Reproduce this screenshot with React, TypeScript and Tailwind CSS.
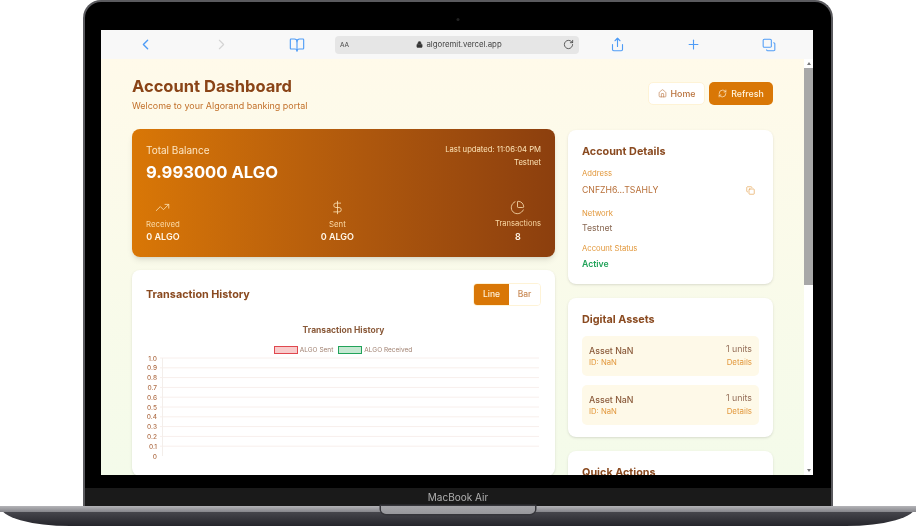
import React from 'react';
import {
  BookOpen,
  ChevronLeft,
  ChevronRight,
  Copy,
  DollarSign,
  Home,
  Lock,
  PieChart,
  Plus,
  RefreshCw,
  RotateCw,
  Share,
  TrendingUp,
} from 'lucide-react';

const ticks = ['1.0', '0.9', '0.8', '0.7', '0.6', '0.5', '0.4', '0.3', '0.2', '0.1', '0'];

const assets = [
  { name: 'Asset NaN', id: 'ID: NaN', units: '1 units' },
  { name: 'Asset NaN', id: 'ID: NaN', units: '1 units' },
];

const SafariBar = () => (
  <div className="flex h-[29px] shrink-0 items-center bg-[#f8f8f8] pl-[6px] text-[#4f9cf6]">
    <div className="flex w-[76px] justify-center">
      <ChevronLeft size={17} strokeWidth={1.9} />
    </div>
    <div className="flex w-[76px] justify-center text-[#d4d4d4]">
      <ChevronRight size={17} strokeWidth={1.6} />
    </div>
    <div className="flex w-[76px] justify-center">
      <BookOpen size={16} strokeWidth={1.7} />
    </div>
    <div className="flex h-[18px] w-[244px] items-center rounded-[4px] bg-[#e6e6e6] px-[5px] text-[#444]">
      <span className="pt-[2px] text-[6.5px]">AA</span>
      <div className="flex flex-1 items-center justify-center gap-[3px] pl-[6px]">
        <Lock size={7} fill="#333" strokeWidth={2} />
        <span className="text-[7.8px]">algoremit.vercel.app</span>
      </div>
      <RotateCw size={11} strokeWidth={1.8} />
    </div>
    <div className="flex w-[76px] justify-center">
      <Share size={15} strokeWidth={1.8} />
    </div>
    <div className="flex w-[76px] justify-center">
      <Plus size={15} strokeWidth={1.8} />
    </div>
    <div className="flex w-[76px] justify-center">
      <Copy size={14} strokeWidth={1.8} className="-scale-x-100 -scale-y-100" />
    </div>
  </div>
);

const BalanceCard = () => (
  <div className="flex h-[128px] flex-col justify-between rounded-[8px] bg-gradient-to-r from-[#d97706] to-[#8c3f0e] px-[14px] pt-[14px] pb-[14px] text-white shadow-md">
    <div className="flex items-start justify-between">
      <div>
        <div className="text-[10px] leading-[14px] text-[#fde6c4]">Total Balance</div>
        <div className="mt-[4px] text-[16.6px] leading-[22px] font-bold">9.993000 ALGO</div>
      </div>
      <div className="text-right text-[7.7px] leading-[13px] text-[#fde3b5]">
        <div>Last updated: 11:06:04 PM</div>
        <div>Testnet</div>
      </div>
    </div>
    <div className="flex items-end justify-between">
      <div className="flex flex-col items-center">
        <TrendingUp size={15} strokeWidth={1.3} className="text-[#fde3b5]" />
        <div className="mt-[3px] text-[7.8px] leading-[12px] text-[#fbd9a5]">Received</div>
        <div className="text-[9px] leading-[13px] font-semibold text-[#fff6e8]">0 ALGO</div>
      </div>
      <div className="flex flex-col items-center">
        <DollarSign size={15} strokeWidth={1.3} className="text-[#fde3b5]" />
        <div className="mt-[3px] text-[7.8px] leading-[12px] text-[#fbd9a5]">Sent</div>
        <div className="text-[9px] leading-[13px] font-semibold text-[#fff6e8]">0 ALGO</div>
      </div>
      <div className="flex flex-col items-center">
        <PieChart size={15} strokeWidth={1.3} className="text-[#fde3b5]" />
        <div className="mt-[3px] text-[7.6px] leading-[12px] text-[#fbd9a5]">Transactions</div>
        <div className="text-[9px] leading-[13px] font-semibold text-[#fff6e8]">8</div>
      </div>
    </div>
  </div>
);

const HistoryCard = () => (
  <div className="h-[206px] rounded-[8px] bg-white px-[14px] pt-[13px] shadow-sm">
    <div className="flex items-center justify-between">
      <h2 className="pt-[1px] text-[10.8px] font-bold text-[#8a4a20]">Transaction History</h2>
      <div className="flex h-[23px] overflow-hidden rounded-[4px] border border-[#fef3d6] text-[8.5px] font-medium">
        <div className="flex w-[35px] items-center justify-center bg-[#d97706] text-[#fff3dc]">Line</div>
        <div className="flex w-[31px] items-center justify-center bg-white text-[#c98a55]">Bar</div>
      </div>
    </div>
    <div className="mt-[18px] text-center text-[8.5px] leading-[12px] font-bold text-[#8a5a3a]">Transaction History</div>
    <div className="mt-[10px] flex items-center justify-center gap-[2px] pr-[1px] text-[6.5px] leading-[8px] text-[#a08070]">
      <span className="h-[8px] w-[24px] border-[1.5px] border-[#e0484f] bg-[#f8cccc]" />
      <span>ALGO Sent</span>
      <span className="ml-[3px] h-[8px] w-[24px] border-[1.5px] border-[#22a35a] bg-[#c6e8d2]" />
      <span>ALGO Received</span>
    </div>
    <svg width="395" height="108" fontFamily="Inter, sans-serif" fontSize="6.5" fontWeight="500" fill="#b0704a">
      {ticks.map((t, i) => (
        <g key={t}>
          {i < 10 && <line x1="14" x2="393" y1={4 + i * 9.8} y2={4 + i * 9.8} stroke="#f8efec" strokeWidth="1" />}
          <text x="11" y={6.5 + i * 9.8} textAnchor="end">
            {t}
          </text>
        </g>
      ))}
      <line x1="16.5" x2="16.5" y1="4" y2="102" stroke="#f3eeea" strokeWidth="1" />
    </svg>
  </div>
);

const AccountDetails = () => (
  <div className="h-[154px] rounded-[8px] bg-white px-[14px] pt-[14px] shadow-sm">
    <h2 className="text-[10.8px] leading-[16px] font-bold text-[#8a4a20]">Account Details</h2>
    <div className="mt-[8px] text-[7.7px] leading-[12px] text-[#e2983c]">Address</div>
    <div className="mt-[3px] flex items-center justify-between pr-[4px] text-[8.7px] leading-[14px] text-[#b8703a]">
      <span>CNFZH6...TSAHLY</span>
      <Copy size={9} strokeWidth={1.6} className="text-[#e2983c]" />
    </div>
    <div className="mt-[11px] text-[7.7px] leading-[12px] text-[#e2983c]">Network</div>
    <div className="mt-[1px] text-[8.7px] leading-[14px] text-[#8a6a55]">Testnet</div>
    <div className="mt-[8px] text-[7.7px] leading-[12px] text-[#e2983c]">Account Status</div>
    <div className="mt-[2px] text-[8.7px] leading-[14px] font-semibold text-[#22a35a]">Active</div>
  </div>
);

const DigitalAssets = () => (
  <div className="h-[139px] rounded-[8px] bg-white px-[14px] pt-[14px] shadow-sm">
    <h2 className="text-[10.8px] leading-[16px] font-bold text-[#8a4a20]">Digital Assets</h2>
    <div className="mt-[8px] flex flex-col gap-[9px]">
      {assets.map((a, i) => (
        <div key={i} className="flex h-[40px] items-center justify-between rounded-[5px] bg-[#fef9e8] px-[7px]">
          <div>
            <div className="text-[8.8px] leading-[12px] font-medium text-[#8a5a3a]">{a.name}</div>
            <div className="text-[7.7px] leading-[11px] text-[#e2983c]">{a.id}</div>
          </div>
          <div className="text-right">
            <div className="text-[8.8px] leading-[13px] text-[#96705a]">{a.units}</div>
            <div className="text-[7.9px] leading-[15px] text-[#e2983c]">Details</div>
          </div>
        </div>
      ))}
    </div>
  </div>
);

const Dashboard = () => (
  <div className="min-w-0 flex-1 overflow-hidden bg-gradient-to-b from-[#fffaea] to-[#f4fbea] px-[31px] pt-[16px]">
    <div className="flex items-start justify-between">
      <div>
        <h1 className="text-[16.5px] leading-[22px] font-bold text-[#8a4417]">Account Dashboard</h1>
        <p className="mt-[2px] text-[8.95px] leading-[13px] text-[#c2702a]">Welcome to your Algorand banking portal</p>
      </div>
      <div className="mt-[7px] flex gap-[4px] text-[8.8px] font-medium">
        <div className="flex h-[23px] w-[57px] items-center justify-center gap-[4px] rounded-[5px] border border-[#fef3d6] bg-white text-[#b8703a]">
          <Home size={9} strokeWidth={1.6} />
          Home
        </div>
        <div className="flex h-[23px] w-[64px] items-center justify-center gap-[4px] rounded-[5px] bg-[#d97706] text-[#fff3dc]">
          <RefreshCw size={9} strokeWidth={1.8} />
          Refresh
        </div>
      </div>
    </div>
    <div className="mt-[17px] flex gap-[13px]">
      <div className="flex w-[423px] shrink-0 flex-col gap-[13px]">
        <BalanceCard />
        <HistoryCard />
      </div>
      <div className="mt-[1px] flex w-[205px] shrink-0 flex-col gap-[14px]">
        <AccountDetails />
        <DigitalAssets />
        <div className="h-[60px] rounded-[8px] bg-white px-[14px] pt-[14px] shadow-sm">
          <h2 className="text-[10.8px] leading-[16px] font-bold text-[#8a4a20]">Quick Actions</h2>
        </div>
      </div>
    </div>
  </div>
);

const Scrollbar = () => (
  <div className="flex w-[9px] shrink-0 flex-col items-center bg-white">
    <div className="flex h-[9px] items-center">
      <div className="h-0 w-0 border-x-[2px] border-b-[3px] border-x-transparent border-b-[#777]" />
    </div>
    <div className="h-[217px] w-full bg-[#a8a8a8]" />
    <div className="flex-1" />
    <div className="flex h-[9px] items-center">
      <div className="h-0 w-0 border-x-[2px] border-t-[3px] border-x-transparent border-t-[#777]" />
    </div>
  </div>
);

export default function App() {
  return (
    <div className="flex h-[526px] w-[916px] flex-col items-center overflow-hidden bg-white font-['Inter',sans-serif]">
      {/* lid */}
      <div className="w-[750px] rounded-t-[18px] border-x-[2px] border-t-[2px] border-[#5a5a5e] bg-black">
        <div className="relative pt-[28px] pr-[18px] pl-[16px]">
          <div className="absolute top-[16px] left-1/2 h-[3px] w-[3px] -translate-x-1/2 rounded-full bg-[#222]" />
          <div className="flex h-[445px] flex-col overflow-hidden bg-white blur-[0.45px]">
            <SafariBar />
            <div className="flex min-h-0 flex-1">
              <Dashboard />
              <Scrollbar />
            </div>
          </div>
          <div className="h-[13px]" />
        </div>
        <div className="flex h-[18px] items-center justify-center bg-[#1a1a1a] text-[10px] text-[#b0b0b0] blur-[0.3px]">MacBook Air</div>
      </div>
      {/* base */}
      <div className="relative h-[20px] w-[916px] rounded-b-[70px_20px] bg-gradient-to-b from-[#55555b] to-[#25252b]">
        <div className="flex h-[6px] justify-center bg-gradient-to-b from-[#b4b4b8] to-[#85858a]">
          <div className="h-[8px] w-[154px] rounded-b-[5px] bg-gradient-to-b from-[#a6a6aa] to-[#97979b] shadow-[0_0_0_1.5px_#35353a]" />
        </div>
      </div>
    </div>
  );
}
